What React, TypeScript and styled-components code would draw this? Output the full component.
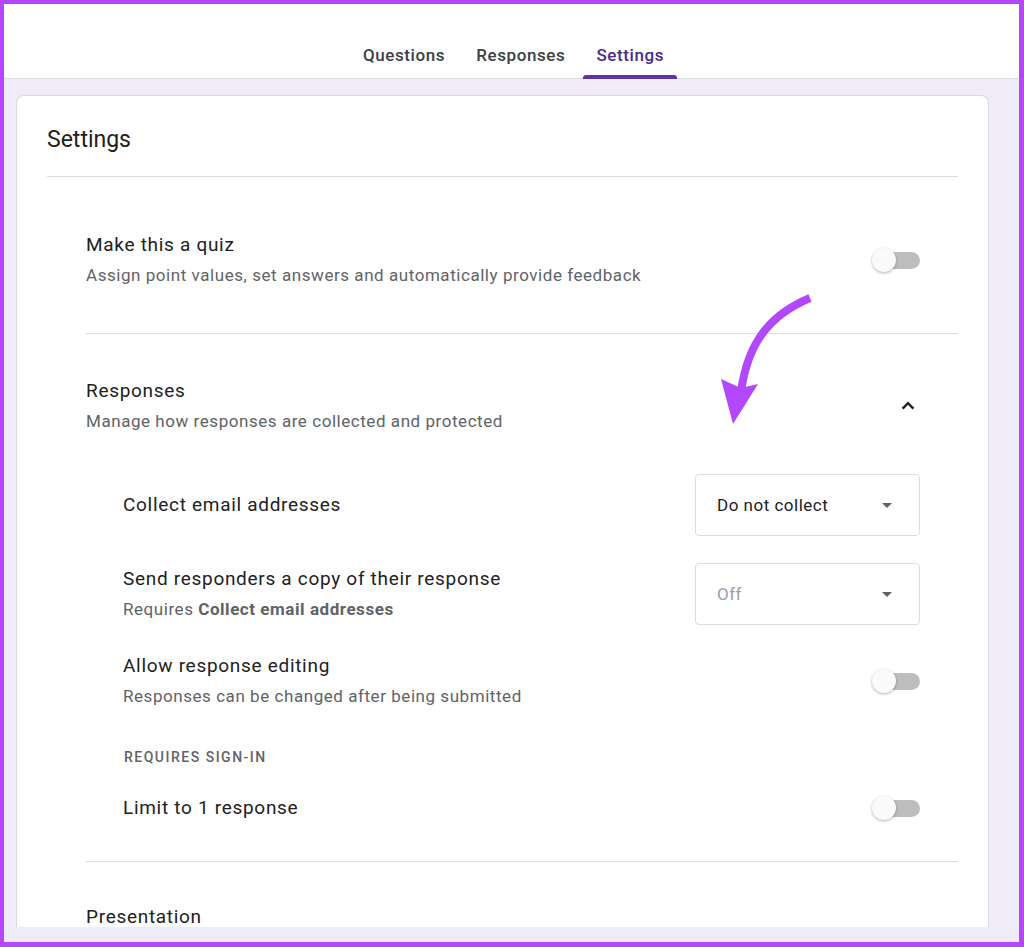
import styled, { createGlobalStyle } from "styled-components";

const GlobalStyle = createGlobalStyle`
  html, body {
    margin: 0;
    padding: 0;
    background: #ffffff;
  }

  * {
    box-sizing: border-box;
  }
`;

const tabs = ["Questions", "Responses", "Settings"];

const Toggle = () => (
  <S.Switch>
    <S.Track />
    <S.Thumb />
  </S.Switch>
);

const Caret = () => (
  <svg width="10" height="5" viewBox="0 0 10 5">
    <path d="M0 0 L10 0 L5 5 Z" fill="#5f6368" />
  </svg>
);

const Chevron = ({ up }: { up?: boolean }) => (
  <S.IconBox>
    <svg width="24" height="24" viewBox="0 0 24 24" style={{ transform: up ? "none" : "rotate(180deg)" }}>
      <path d="M6.6 14.6 L12 9.2 L17.4 14.6" fill="none" stroke="#202124" strokeWidth="2.4" />
    </svg>
  </S.IconBox>
);

const App = () => {
  return (
    <S.Frame>
      <GlobalStyle />
      <S.Header>
        <S.Tabs>
          {tabs.map((tab) => (
            <S.Tab key={tab} $active={tab === "Settings"}>
              <span>{tab}</span>
              <S.TabBar $active={tab === "Settings"} />
            </S.Tab>
          ))}
        </S.Tabs>
      </S.Header>

      <S.Main>
        <S.Card>
          <S.CardTitle>Settings</S.CardTitle>
          <S.Divider $inset={0} $gap={56} />

          <S.Row>
            <S.TextBlock>
              <S.Title>Make this a quiz</S.Title>
              <S.Sub>Assign point values, set answers and automatically provide feedback</S.Sub>
            </S.TextBlock>
            <Toggle />
          </S.Row>
          <S.Divider $inset={39} $top={46} $gap={45} />

          <S.Row>
            <S.TextBlock>
              <S.Title>Responses</S.Title>
              <S.Sub>Manage how responses are collected and protected</S.Sub>
            </S.TextBlock>
            <Chevron up />
          </S.Row>

          <S.SubRow $top={41}>
            <S.Title>Collect email addresses</S.Title>
            <S.Select>
              <span>Do not collect</span>
              <Caret />
            </S.Select>
          </S.SubRow>

          <S.SubRow $top={27}>
            <S.TextBlock>
              <S.Title>Send responders a copy of their response</S.Title>
              <S.Sub>
                Requires <b>Collect email addresses</b>
              </S.Sub>
            </S.TextBlock>
            <S.Select $disabled>
              <span>Off</span>
              <Caret />
            </S.Select>
          </S.SubRow>

          <S.SubRow $top={29}>
            <S.TextBlock>
              <S.Title>Allow response editing</S.Title>
              <S.Sub>Responses can be changed after being submitted</S.Sub>
            </S.TextBlock>
            <Toggle />
          </S.SubRow>

          <S.Overline>REQUIRES SIGN-IN</S.Overline>

          <S.SubRow $top={29}>
            <S.Title>Limit to 1 response</S.Title>
            <Toggle />
          </S.SubRow>
          <S.Divider $inset={39} $top={41} $gap={43} />

          <S.Row>
            <S.TextBlock $tall>
              <S.Title>Presentation</S.Title>
            </S.TextBlock>
            <Chevron />
          </S.Row>
        </S.Card>
      </S.Main>

      {/* hand-drawn pointer toward the email collection dropdown */}
      <S.Pointer width="1024" height="947" viewBox="0 0 1024 947">
        <path d="M810 298 C 772 314, 748 340, 741 392" fill="none" stroke="#b347fd" strokeWidth="8" />
        <path d="M721 379 L741 388 L758 384 L733 424 Z" fill="#b347fd" />
      </S.Pointer>
    </S.Frame>
  );
};

export default App;

const S = {
  Frame: styled.div`
    position: relative;
    width: 1024px;
    height: 947px;
    display: flex;
    flex-direction: column;
    border-style: solid;
    border-color: #b347fd;
    border-width: 4px 5px 5px 4px;
    box-shadow: inset 0 0 0 1px #e6c4ff;
    font-family: Roboto, "Liberation Sans", sans-serif;
    overflow: hidden;
  `,

  Header: styled.header`
    flex: 0 0 75px;
    display: flex;
    justify-content: center;
    background: #ffffff;
    border-bottom: 1px solid #dadce0;
  `,

  Tabs: styled.nav`
    display: flex;
    gap: 5px;
    height: 100%;
    padding-left: 4px;
  `,

  Tab: styled.div<{ $active?: boolean }>`
    display: flex;
    flex-direction: column;
    align-items: center;
    justify-content: flex-end;
    padding: 0 13px;
    font-size: 17px;
    font-weight: 500;
    line-height: 24px;
    letter-spacing: 0.6px;
    color: ${(p) => (p.$active ? "#4a2a8f" : "#3c4043")};
    margin-bottom: -1px;

    span {
      margin-bottom: 8px;
    }
  `,

  TabBar: styled.div<{ $active?: boolean }>`
    align-self: stretch;
    height: 4px;
    border-radius: 3px 3px 0 0;
    margin: 0 -13px;
    background: ${(p) => (p.$active ? "#5a35a6" : "transparent")};
  `,

  Main: styled.main`
    flex: 1;
    display: flex;
    min-height: 0;
    background: #f0ebf8;
    padding: 16px 30px 15px 12px;
  `,

  Card: styled.section`
    flex: 1;
    display: flex;
    flex-direction: column;
    background: #ffffff;
    border: 1px solid #dadce0;
    border-bottom: none;
    border-radius: 8px 8px 0 0;
    padding: 28px 30px 0 30px;
    overflow: hidden;
  `,

  CardTitle: styled.h1`
    margin: 0;
    font-size: 23px;
    font-weight: 400;
    line-height: 32px;
    color: #202124;
  `,

  Divider: styled.hr<{ $inset: number; $top?: number; $gap: number }>`
    flex: none;
    border: none;
    height: 1px;
    background: #dadce0;
    margin: ${(p) => p.$top ?? 20}px 0 ${(p) => p.$gap}px ${(p) => p.$inset}px;
  `,

  Row: styled.div`
    display: flex;
    align-items: center;
    justify-content: space-between;
    padding: 0 38px 0 39px;
  `,

  SubRow: styled.div<{ $top: number }>`
    display: flex;
    align-items: center;
    justify-content: space-between;
    margin-top: ${(p) => p.$top}px;
    padding: 0 38px 0 76px;
  `,

  TextBlock: styled.div<{ $tall?: boolean }>`
    display: flex;
    flex-direction: column;
    gap: 6px;
    min-height: ${(p) => (p.$tall ? "54px" : "0")};
  `,

  Title: styled.div`
    font-size: 19px;
    line-height: 24px;
    color: #202124;
    letter-spacing: 0.7px;
  `,

  Sub: styled.div`
    font-size: 17px;
    line-height: 24px;
    color: #5f6368;
    letter-spacing: 0.55px;

    b {
      font-weight: 700;
    }
  `,

  Overline: styled.div`
    margin: 39px 0 0 77px;
    font-size: 14px;
    font-weight: 500;
    line-height: 20px;
    letter-spacing: 1.5px;
    color: #5f6368;
  `,

  Select: styled.div<{ $disabled?: boolean }>`
    width: 225px;
    height: 62px;
    display: flex;
    align-items: center;
    justify-content: space-between;
    padding: 0 27px 0 21px;
    border: 1px solid #dadce0;
    border-radius: 4px;
    font-size: 17px;
    letter-spacing: 0.5px;
    color: ${(p) => (p.$disabled ? "#9aa0a6" : "#202124")};
  `,

  Switch: styled.div`
    position: relative;
    width: 48px;
    height: 24px;
    display: flex;
    align-items: center;
  `,

  Track: styled.div`
    margin-left: 12px;
    width: 36px;
    height: 17px;
    border-radius: 9px;
    background: #bdbdbd;
  `,

  Thumb: styled.div`
    position: absolute;
    left: 0;
    top: 0;
    width: 24px;
    height: 24px;
    border-radius: 50%;
    background: #fafafa;
    box-shadow: 0 1px 3px rgba(0, 0, 0, 0.3);
  `,

  IconBox: styled.div`
    width: 24px;
    height: 24px;
    display: flex;
  `,

  Pointer: styled.svg`
    position: absolute;
    left: -4px;
    top: -4px;
    pointer-events: none;
  `,
};
